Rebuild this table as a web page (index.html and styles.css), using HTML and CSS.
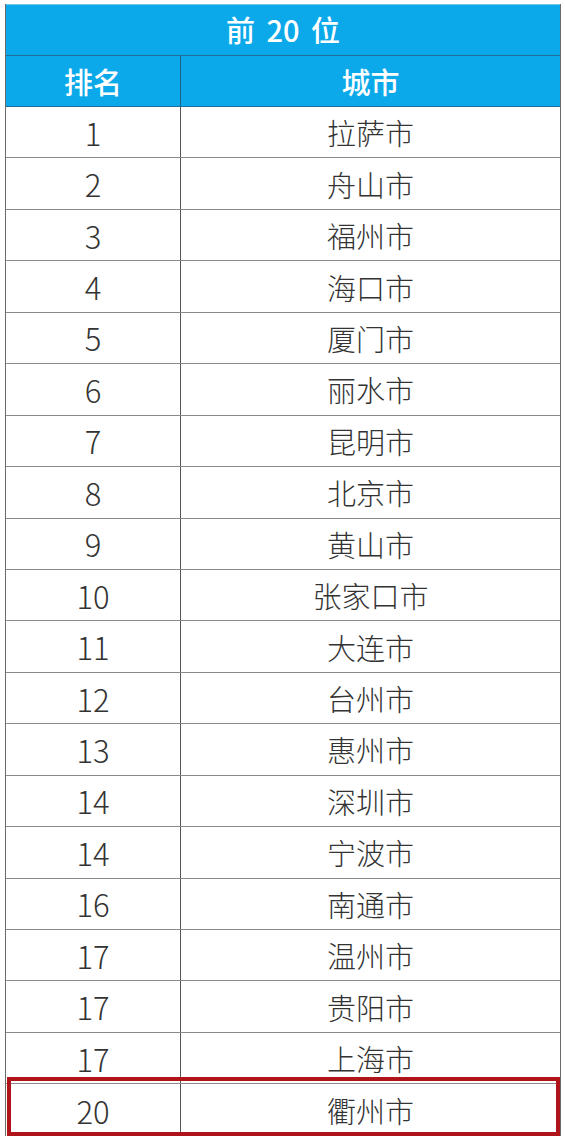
FILE: index.html
```html
<!DOCTYPE html>
<html lang="zh">
<head>
<meta charset="utf-8">
<link rel="stylesheet" href="styles.css">
</head>
<body>
<div class="table">
  <div class="title">前 20 位</div>
  <div class="row head"><div class="c1">排名</div><div class="c2">城市</div></div>
  <div class="row"><div class="c1">1</div><div class="c2">拉萨市</div></div>
  <div class="row"><div class="c1">2</div><div class="c2">舟山市</div></div>
  <div class="row"><div class="c1">3</div><div class="c2">福州市</div></div>
  <div class="row"><div class="c1">4</div><div class="c2">海口市</div></div>
  <div class="row"><div class="c1">5</div><div class="c2">厦门市</div></div>
  <div class="row"><div class="c1">6</div><div class="c2">丽水市</div></div>
  <div class="row"><div class="c1">7</div><div class="c2">昆明市</div></div>
  <div class="row"><div class="c1">8</div><div class="c2">北京市</div></div>
  <div class="row"><div class="c1">9</div><div class="c2">黄山市</div></div>
  <div class="row"><div class="c1">10</div><div class="c2">张家口市</div></div>
  <div class="row"><div class="c1">11</div><div class="c2">大连市</div></div>
  <div class="row"><div class="c1">12</div><div class="c2">台州市</div></div>
  <div class="row"><div class="c1">13</div><div class="c2">惠州市</div></div>
  <div class="row"><div class="c1">14</div><div class="c2">深圳市</div></div>
  <div class="row"><div class="c1">14</div><div class="c2">宁波市</div></div>
  <div class="row"><div class="c1">16</div><div class="c2">南通市</div></div>
  <div class="row"><div class="c1">17</div><div class="c2">温州市</div></div>
  <div class="row"><div class="c1">17</div><div class="c2">贵阳市</div></div>
  <div class="row"><div class="c1">17</div><div class="c2">上海市</div></div>
  <div class="row highlight"><div class="c1">20</div><div class="c2">衢州市</div></div>
</div>
</body>
</html>
```

FILE: styles.css
```css
html, body {
  margin: 0;
  padding: 0;
  background: #ffffff;
}
body {
  font-family: "Noto Sans CJK SC", "Liberation Sans", sans-serif;
}
.table {
  width: 556px;
  margin: 4px 0 0 5px;
  border-left: 1px solid #6a6a6a;
  border-right: 1px solid #6a6a6a;
  box-sizing: border-box;
}
.title {
  height: 52px;
  box-sizing: border-box;
  background: #0ca9ea;
  color: #ffffff;
  font-size: 29px;
  font-weight: 500;
  word-spacing: 5px;
  display: flex;
  align-items: center;
  justify-content: center;
  padding-bottom: 3px;
  border-bottom: 1px solid #1f6d98;
  border-top: 1px solid #6fc9ee;
}
.row {
  display: grid;
  grid-template-columns: 175px 1fr;
  height: 51.45px;
  box-sizing: border-box;
  border-bottom: 1px solid #8a8a8a;
  color: #333333;
  font-size: 29px;
  font-weight: 300;
}
.row > div {
  display: flex;
  align-items: center;
  justify-content: center;
}
.row .c1 {
  border-right: 1px solid #555555;
  font-size: 31px;
  font-weight: 300;
}
.row.head {
  height: 51px;
  background: #0ca9ea;
  color: #ffffff;
  font-weight: 500;
  border-bottom: 1px solid #1f6d98;
}
.row.head .c1 {
  border-right: 1px solid #1f5e80;
  font-size: 29px;
  font-weight: 500;
}
.row.highlight {
  position: relative;
  border-bottom: none;
}
.row.highlight::after {
  content: "";
  position: absolute;
  top: -7px;
  left: 1px;
  right: 0;
  bottom: 0;
  border: 4px solid #b0141b;
}
```
